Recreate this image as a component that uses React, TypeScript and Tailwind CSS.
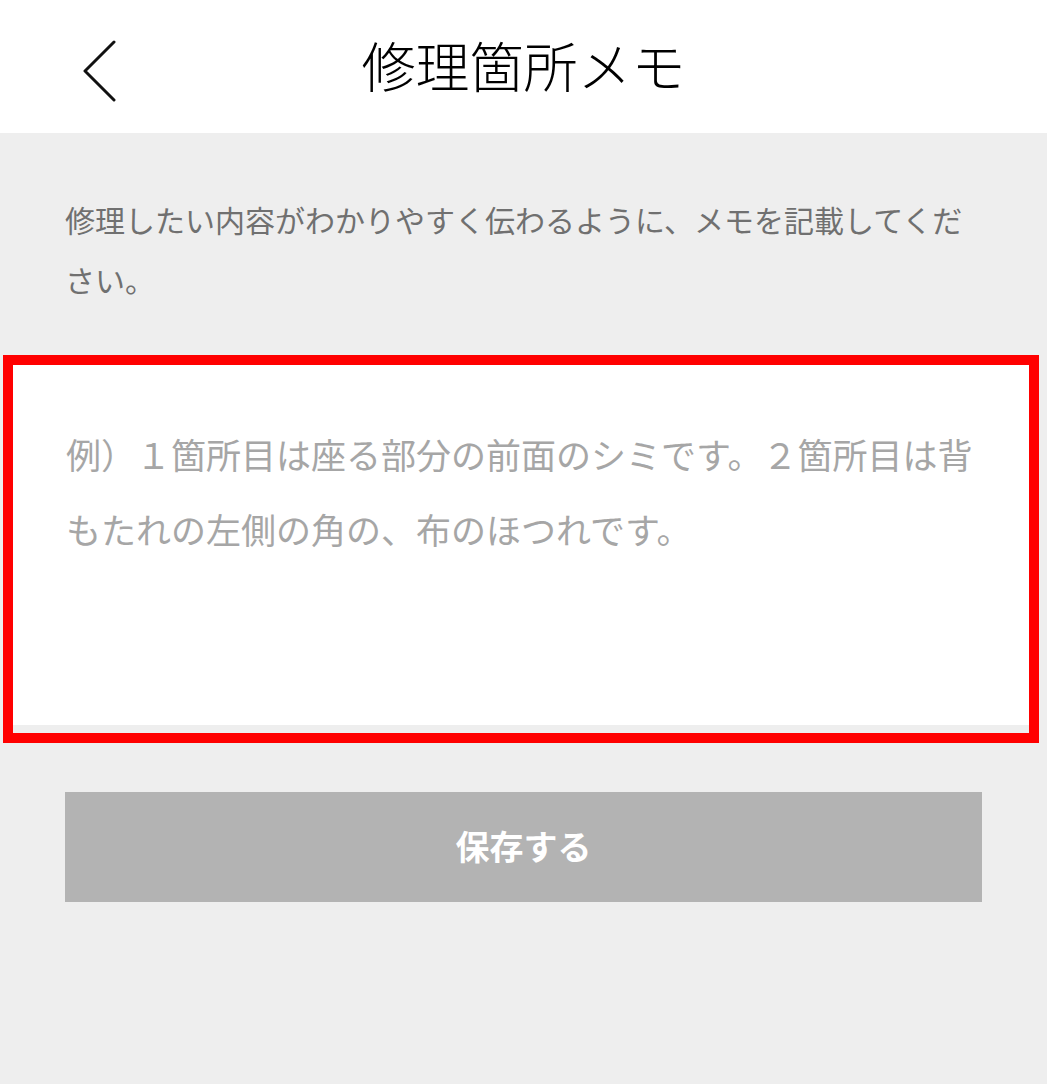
import { useState } from 'react';

function BackChevron() {
  return (
    <svg width="34" height="62" viewBox="0 0 34 62" fill="none" aria-hidden="true">
      <polyline
        points="31,2 2,31 31,60"
        stroke="#111"
        strokeWidth="3"
        strokeLinecap="round"
        strokeLinejoin="round"
      />
    </svg>
  );
}

export default function App() {
  const [memo, setMemo] = useState('');

  return (
    <div
      className="min-h-[1084px] w-[1047px] bg-[#eeeeee] flex flex-col"
      style={{ fontFamily: '"Noto Sans", "Noto Sans CJK JP", sans-serif' }}
    >
      {/* Header */}
      <header className="h-[133px] bg-white flex items-center relative shrink-0">
        <button className="ml-[83px] mt-[8px] flex items-center" aria-label="戻る">
          <BackChevron />
        </button>
        <h1
          className="absolute left-0 right-0 top-[40px] text-center text-[54px] leading-[60px] text-black font-light pointer-events-none"
          style={{ fontFamily: '"Liberation Serif", "Noto Sans CJK JP", serif' }}
        >
          修理箇所メモ
        </h1>
      </header>

      {/* Description */}
      <p className="px-[65px] pt-[58px] text-[30px] leading-[60px] text-[#707070]">
        修理したい内容がわかりやすく伝わるように、メモを記載してください。
      </p>

      {/* Memo field (highlighted) */}
      <div className="mt-[44px] ml-[3px] mr-[8px] border-[10px] border-[#ff0000] bg-[#eeeeee] pb-[8px]">
        <textarea
          value={memo}
          onChange={(e) => setMemo(e.target.value)}
          placeholder="例）１箇所目は座る部分の前面のシミです。２箇所目は背もたれの左側の角の、布のほつれです。"
          className="block w-full h-[360px] resize-none bg-white pl-[53px] pr-[45px] pt-[53px] text-[35px] leading-[75px] text-[#333] placeholder:text-[#a6a6a6] outline-none"
        />
      </div>

      {/* Save button */}
      <div className="px-[65px] mt-[49px]">
        <button className="w-full h-[110px] bg-[#b3b3b3] text-white text-[34px] font-bold flex items-center justify-center">
          保存する
        </button>
      </div>
    </div>
  );
}
